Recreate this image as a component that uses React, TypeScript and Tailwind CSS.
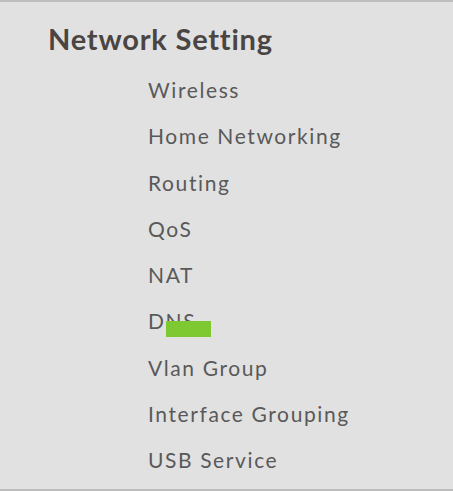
import React from 'react';

const items = [
  'Wireless',
  'Home Networking',
  'Routing',
  'QoS',
  'NAT',
  'DNS',
  'Vlan Group',
  'Interface Grouping',
  'USB Service',
];

const App: React.FC = () => {
  return (
    <div className="w-[453px] h-[491px] bg-[#e1e1e1] border-t-2 border-b-2 border-[#bdbdbd] overflow-hidden font-['Lato',_sans-serif]">
      <h2 className="pl-[48px] pt-[19px] h-[44px] text-[29px] leading-[36px] tracking-[0.8px] font-bold text-[#4a4543]">
        Network Setting
      </h2>
      <ul className="pl-[148px] pt-[21px]">
        {items.map((item) => (
          <li key={item} className="relative h-[46.3px] leading-[46px] text-[21px] tracking-[1.6px] text-[#595959]">
            {item}
            {item === 'DNS' && (
              <span className="absolute left-[18px] top-[23px] w-[45px] h-[16px] bg-[#7ec832]" />
            )}
          </li>
        ))}
      </ul>
    </div>
  );
};

export default App;
